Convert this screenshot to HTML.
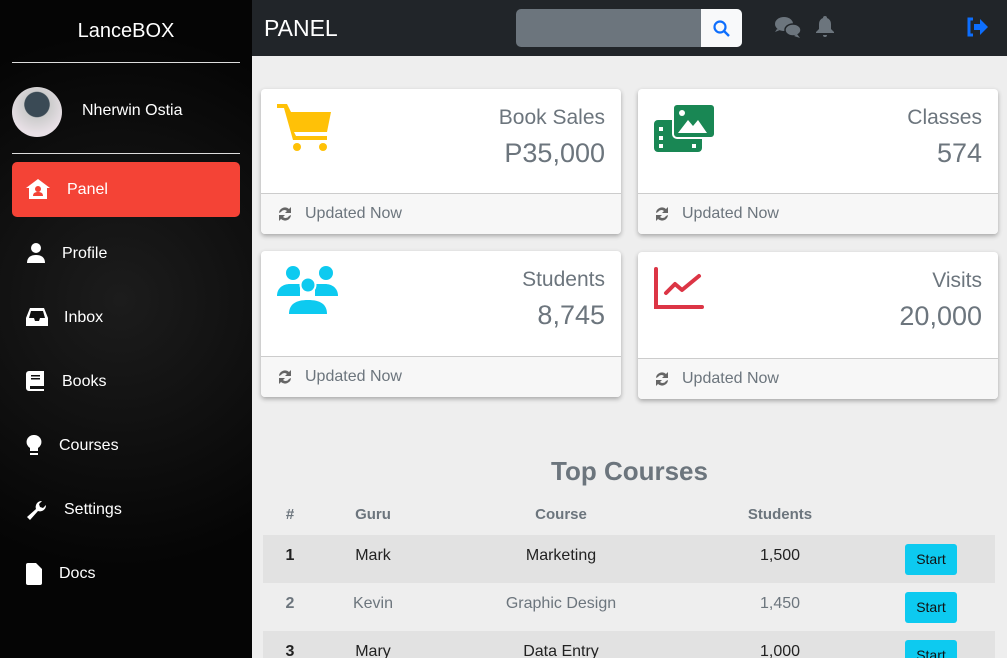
<!DOCTYPE html>
<html><head><style>
*{box-sizing:border-box;margin:0;padding:0}
html{width:1007px;height:658px;overflow:hidden}
body{width:1007px;height:658px;overflow:hidden;background:#eeeeee;font-family:"Liberation Sans",sans-serif;position:relative}
.side{position:absolute;left:0;top:0;width:252px;height:658px;background:radial-gradient(circle at 120px 300px,#1c1c1c,#050505 70%)}
.logo{position:absolute;top:20px;width:252px;text-align:center;color:#fff;font-size:20px}
.hr{position:absolute;left:12px;width:228px;height:1px;background:#ddd}
.av{position:absolute;left:12px;top:87px;width:50px;height:50px;border-radius:50%;background:radial-gradient(circle at 50% 35%,#3a4a55 30%,#ccc 32%,#e8e0e6 70%)}
.name{position:absolute;left:82px;top:102px;color:#fff;font-size:16px}
.nav{position:absolute;left:12px;width:228px;height:55px;color:#fff;font-size:16px;border-radius:5px}
.nav.act{background:#f44336}
.nav svg{position:absolute;left:14px;top:17px}
.nav span{position:absolute;top:19px}
.top{position:absolute;left:252px;top:0;width:755px;height:56px;background:#212529}
.ttl{position:absolute;left:12px;top:15px;color:#fff;font-size:23px}
.srch{position:absolute;left:264px;top:9px;width:226px;height:38px;background:#6c757d;border-radius:5px;overflow:hidden}
.srch div{position:absolute;right:0;top:0;width:41px;height:38px;background:#f8f9fa}
.card{position:absolute;width:360px;background:#fff;border-radius:4px;box-shadow:0 2px 5px rgba(0,0,0,.3);overflow:hidden}
.card .t{position:absolute;right:16px;top:17px;font-size:21px;color:#6c757d}
.card .v{position:absolute;right:16px;top:49px;font-size:27px;color:#6c757d}
.card .f{position:absolute;left:0;bottom:0;width:100%;height:41px;background:#f7f7f7;border-top:1px solid #ccc;color:#6c757d;font-size:16px}
.card .f span{position:absolute;left:44px;top:11px}
.card .f svg{position:absolute;left:16px;top:12px}
.card .ic{position:absolute;left:16px;top:15px}
h2{position:absolute;left:252px;width:755px;top:456px;text-align:center;font-size:26px;color:#6c757d}
.th{position:absolute;top:506px;font-weight:bold;font-size:15px;color:#6c757d;transform:translateX(-50%)}
.row{position:absolute;left:263px;width:732px;height:48px}
.c{position:absolute;top:12px;font-size:16px;transform:translateX(-50%)}
.btn{position:absolute;left:642px;top:9px;width:52px;height:31px;background:#0dcaf0;border-radius:3px;font-size:14px;color:#111;text-align:center;line-height:31px}
</style></head><body>
<div class="side">
<div class="logo">LanceBOX</div>
<div class="hr" style="top:62px"></div>
<div class="av"></div>
<div class="name">Nherwin Ostia</div>
<div class="hr" style="top:153px"></div>
<div class="nav act" style="top:162px"><svg width="24" height="20" viewBox="0 0 24 20"><path d="M12 0L0 9h3v11h18V9h3z" fill="#fff"/><circle cx="12" cy="10" r="3" fill="#f44336"/><path d="M7 17c0-3 2-4 5-4s5 1 5 4z" fill="#f44336"/></svg><span style="left:55px">Panel</span></div>
<div class="nav" style="top:226px"><svg width="20" height="20" viewBox="0 0 20 20"><circle cx="10" cy="5" r="5" fill="#fff"/><path d="M1 20c0-6 4-8 9-8s9 2 9 8z" fill="#fff"/></svg><span style="left:50px">Profile</span></div>
<div class="nav" style="top:290px"><svg width="22" height="20" viewBox="0 0 22 20"><path d="M4 1h14l4 10v8H0v-8z" fill="#fff"/><path d="M3 11h5l1 3h4l1-3h5L17 4H5z" fill="#111"/></svg><span style="left:52px">Inbox</span></div>
<div class="nav" style="top:354px"><svg width="18" height="20" viewBox="0 0 18 20"><path d="M3 0h15v15H4v3h14v2H3a3 3 0 01-3-3V3a3 3 0 013-3z" fill="#fff"/><path d="M5 4h9v1.5H5zM5 7h9v1.5H5z" fill="#111"/></svg><span style="left:50px">Books</span></div>
<div class="nav" style="top:418px"><svg width="16" height="22" viewBox="0 0 16 22"><path d="M8 0a7 7 0 00-4 13v3h8v-3A7 7 0 008 0zM4 18h8v2H4z" fill="#fff"/></svg><span style="left:47px">Courses</span></div>
<div class="nav" style="top:482px"><svg width="22" height="22" viewBox="0 0 22 22"><path d="M20 6a6 6 0 01-8 6L4 21l-3-3 9-8A6 6 0 0116 2l-3 3 1 3 3 1z" fill="#fff"/></svg><span style="left:52px">Settings</span></div>
<div class="nav" style="top:546px"><svg width="16" height="22" viewBox="0 0 16 22"><path d="M0 2a2 2 0 012-2h8l6 6v14a2 2 0 01-2 2H2a2 2 0 01-2-2z" fill="#fff"/></svg><span style="left:47px">Docs</span></div>
</div>
<div class="top">
<div class="ttl">PANEL</div>
<div class="srch"><div><svg style="position:absolute;left:12px;top:11px" width="17" height="17" viewBox="0 0 17 17"><circle cx="7" cy="7" r="5.5" fill="none" stroke="#0d6efd" stroke-width="2.2"/><path d="M11 11l5 5" stroke="#0d6efd" stroke-width="2.4"/></svg></div></div>
<svg style="position:absolute;left:523px;top:17px" width="26" height="22" viewBox="0 0 26 22"><ellipse cx="9" cy="7" rx="9" ry="7" fill="#6c757d"/><path d="M2 12l-2 3 5-2z" fill="#6c757d"/><ellipse cx="18" cy="13" rx="8" ry="6" fill="#6c757d" stroke="#212529" stroke-width="1.5"/><path d="M22 17l3 4-6-2z" fill="#6c757d"/></svg>
<svg style="position:absolute;left:564px;top:16px" width="18" height="22" viewBox="0 0 18 22"><path d="M9 0a2 2 0 012 2 6 6 0 014 6v5l3 3v1H0v-1l3-3V8a6 6 0 014-6 2 2 0 012-2zM7 19h4a2 2 0 01-4 0z" fill="#6c757d"/></svg>
<svg style="position:absolute;left:714px;top:17px" width="22" height="20" viewBox="0 0 22 20"><path d="M7 2H3v16h4" fill="none" stroke="#0d6efd" stroke-width="3"/><path d="M8 7h6V2l8 8-8 8v-5H8z" fill="#0d6efd"/></svg>
</div>

<div class="card" style="left:261px;top:89px;height:145px"><svg class="ic" width="54" height="50" viewBox="0 0 54 50"><path d="M0 0h10l4 8h40l-4 20H17l2 4h31v4H16L7 4H0z" fill="#ffc107"/><circle cx="20" cy="43" r="4" fill="#ffc107"/><circle cx="46" cy="43" r="4" fill="#ffc107"/></svg><div class="t">Book Sales</div><div class="v">P35,000</div><div class="f"><svg width="16" height="16" viewBox="0 0 16 16"><path d="M2 7a6 6 0 0110-4l2-2v6H8l2-2a4 4 0 00-6 1zM14 9a6 6 0 01-10 4l-2 2V9h6l-2 2a4 4 0 006-1z" fill="#666"/></svg><span>Updated Now</span></div></div>
<div class="card" style="left:638px;top:89px;height:145px"><svg class="ic" width="62" height="50" viewBox="0 0 62 50"><rect x="0" y="16" width="48" height="32" rx="4" fill="#198754"/><rect x="19" y="0" width="42" height="34" rx="4" fill="#198754" stroke="#fff" stroke-width="2"/><path d="M24 29l10-13 5 6 5-6 9 13z" fill="#fff"/><circle cx="28" cy="9" r="3" fill="#fff"/><rect x="5" y="23" width="4" height="4" fill="#fff"/><rect x="5" y="32" width="4" height="4" fill="#fff"/><rect x="5" y="40" width="4" height="4" fill="#fff"/><rect x="38" y="40" width="4" height="4" fill="#fff"/></svg><div class="t">Classes</div><div class="v">574</div><div class="f"><svg width="16" height="16" viewBox="0 0 16 16"><path d="M2 7a6 6 0 0110-4l2-2v6H8l2-2a4 4 0 00-6 1zM14 9a6 6 0 01-10 4l-2 2V9h6l-2 2a4 4 0 006-1z" fill="#666"/></svg><span>Updated Now</span></div></div>
<div class="card" style="left:261px;top:251px;height:146px"><svg class="ic" width="62" height="50" viewBox="0 0 62 50"><circle cx="16" cy="7" r="7" fill="#0dcaf0"/><circle cx="49" cy="7" r="7" fill="#0dcaf0"/><path d="M0 30c0-8 6-12 13-12h10v12z" fill="#0dcaf0"/><path d="M61 30c0-8-6-12-13-12H38v12z" fill="#0dcaf0"/><circle cx="31" cy="19" r="7.5" fill="#0dcaf0" stroke="#fff" stroke-width="2"/><path d="M12 48c0-10 7-14 19-14s19 4 19 14z" fill="#0dcaf0"/></svg><div class="t">Students</div><div class="v">8,745</div><div class="f"><svg width="16" height="16" viewBox="0 0 16 16"><path d="M2 7a6 6 0 0110-4l2-2v6H8l2-2a4 4 0 00-6 1zM14 9a6 6 0 01-10 4l-2 2V9h6l-2 2a4 4 0 006-1z" fill="#666"/></svg><span>Updated Now</span></div></div>
<div class="card" style="left:638px;top:252px;height:147px"><svg class="ic" width="50" height="44" viewBox="0 0 50 44"><path d="M2 2v38h46" fill="none" stroke="#dc3545" stroke-width="4" stroke-linecap="round"/><path d="M12 26l9-9 7 6 17-14" fill="none" stroke="#dc3545" stroke-width="4" stroke-linecap="round" stroke-linejoin="round"/></svg><div class="t">Visits</div><div class="v">20,000</div><div class="f"><svg width="16" height="16" viewBox="0 0 16 16"><path d="M2 7a6 6 0 0110-4l2-2v6H8l2-2a4 4 0 00-6 1zM14 9a6 6 0 01-10 4l-2 2V9h6l-2 2a4 4 0 006-1z" fill="#666"/></svg><span>Updated Now</span></div></div>

<h2>Top Courses</h2>
<div class="th" style="left:290px">#</div><div class="th" style="left:373px">Guru</div><div class="th" style="left:561px">Course</div><div class="th" style="left:780px">Students</div>
<div class="row" style="top:535px;background:#e2e2e2;color:#222"><div class="c" style="left:27px;font-weight:bold">1</div><div class="c" style="left:110px">Mark</div><div class="c" style="left:298px">Marketing</div><div class="c" style="left:517px">1,500</div><div class="btn">Start</div></div>
<div class="row" style="top:583px;color:#6c757d"><div class="c" style="left:27px;font-weight:bold">2</div><div class="c" style="left:110px">Kevin</div><div class="c" style="left:298px">Graphic Design</div><div class="c" style="left:517px">1,450</div><div class="btn">Start</div></div>
<div class="row" style="top:631px;height:27px;overflow:hidden;background:#e2e2e2;color:#222"><div class="c" style="left:27px;font-weight:bold">3</div><div class="c" style="left:110px">Mary</div><div class="c" style="left:298px">Data Entry</div><div class="c" style="left:517px">1,000</div><div class="btn">Start</div></div>
</body></html>
